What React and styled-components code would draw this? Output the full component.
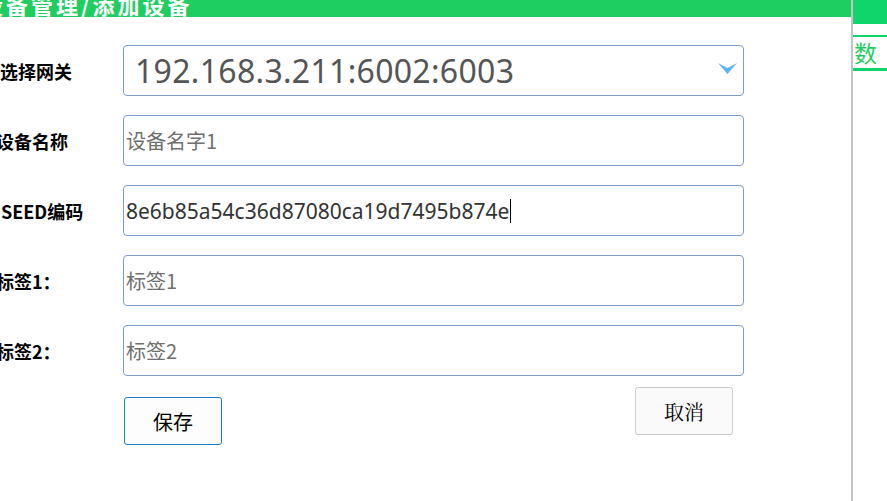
import React from "react";
import styled, { createGlobalStyle } from "styled-components";

const GlobalStyle = createGlobalStyle`
  html, body {
    margin: 0;
    padding: 0;
    background: #ffffff;
    overflow: hidden;
  }
  body {
    font-family: "Noto Sans CJK SC", "Noto Sans", sans-serif;
  }
`;

const fields = [
  { label: "设备名称", placeholder: "设备名字1", value: "" },
  { label: "SEED编码", placeholder: "", value: "8e6b85a54c36d87080ca19d7495b874e", caret: true },
  { label: "标签1：", placeholder: "标签1", value: "" },
  { label: "标签2：", placeholder: "标签2", value: "" },
];

const App = () => {
  return (
    <>
      <GlobalStyle />
      <Page>
        <Dialog>
          <Header>
            <Title>设备管理/添加设备</Title>
          </Header>
          <Body>
            <Row>
              <Label>选择网关</Label>
              <SelectBox>
                <SelectValue>192.168.3.211:6002:6003</SelectValue>
                <svg width="19" height="11" viewBox="0 0 19 11">
                  <polygon points="0,0 9.5,5 19,0 9.5,11" fill="#5ab4f4" />
                </svg>
              </SelectBox>
            </Row>
            {fields.map((f) => (
              <Row key={f.label}>
                <Label $shift={f.label.startsWith("SEED") ? 1 : -4}>
                  {f.label}
                </Label>
                <InputBox>
                  {f.value ? (
                    <InputText>
                      {f.value}
                      {f.caret && <Caret />}
                    </InputText>
                  ) : (
                    <Placeholder>{f.placeholder}</Placeholder>
                  )}
                </InputBox>
              </Row>
            ))}
            <Actions>
              <SaveButton>保存</SaveButton>
              <CancelButton>取消</CancelButton>
            </Actions>
          </Body>
        </Dialog>
        <Divider />
        <SidePanel>
          <SideTopBar />
          <SideTab>数</SideTab>
        </SidePanel>
      </Page>
    </>
  );
};

const Page = styled.div`
  display: flex;
  width: 887px;
  height: 501px;
  overflow: hidden;
`;

const Dialog = styled.div`
  width: 851px;
  flex-shrink: 0;
  display: flex;
  flex-direction: column;
`;

const Header = styled.div`
  height: 17px;
  background-color: #1fce60;
  overflow: hidden;
  display: flex;
  align-items: flex-end;
`;

const Title = styled.div`
  color: #ffffff;
  font-weight: bold;
  font-size: 22px;
  letter-spacing: 3px;
  line-height: 22px;
  white-space: nowrap;
  margin-left: -19px;
  margin-bottom: 2px;
`;

const Body = styled.div`
  display: flex;
  flex-direction: column;
  gap: 19px;
  padding-top: 28px;
`;

const Row = styled.div`
  display: flex;
  align-items: center;
`;

const Label = styled.div`
  width: 123px;
  flex-shrink: 0;
  font-size: 18px;
  font-weight: bold;
  color: #000000;
  margin-left: ${(p) => (p.$shift !== undefined ? p.$shift : 0)}px;
  margin-right: ${(p) => (p.$shift !== undefined ? -p.$shift : 0)}px;
  white-space: nowrap;
`;

const Box = styled.div`
  width: 621px;
  height: 51px;
  box-sizing: border-box;
  border: 1px solid #7f9dc9;
  border-radius: 4px;
  display: flex;
  align-items: center;
  background: #ffffff;
`;

const SelectBox = styled(Box)`
  padding: 0 6px 0 11px;
  justify-content: space-between;
  & > svg {
    margin-top: -4px;
  }
`;

const SelectValue = styled.span`
  font-family: "Noto Sans", "Noto Sans CJK SC", sans-serif;
  font-size: 32px;
  color: #555555;
  letter-spacing: 0.3px;
`;

const InputBox = styled(Box)`
  padding-left: 2px;
`;

const InputText = styled.span`
  font-family: "Noto Sans", "Noto Sans CJK SC", sans-serif;
  font-size: 21px;
  color: #333333;
  display: flex;
  align-items: center;
`;

const Caret = styled.span`
  display: inline-block;
  width: 1px;
  height: 24px;
  background: #000000;
  margin-left: 1px;
`;

const Placeholder = styled.span`
  font-size: 20px;
  color: #6f6f6f;
`;

const Actions = styled.div`
  display: flex;
  align-items: flex-start;
  width: 733px;
  padding-left: 124px;
  box-sizing: border-box;
  justify-content: space-between;
  margin-top: -8px;
`;

const ButtonBase = styled.button`
  width: 98px;
  height: 48px;
  font-size: 20px;
  border-radius: 3px;
  color: #000000;
  cursor: pointer;
  padding: 0;
`;

const SaveButton = styled(ButtonBase)`
  margin-top: 10px;
  border: 1px solid #1a7fd0;
  background: #fdfdfd;
  font-family: "Noto Sans CJK SC", sans-serif;
`;

const CancelButton = styled(ButtonBase)`
  border: 1px solid #cccccc;
  background: #fafafa;
  font-family: "Noto Serif CJK SC", "AR PL UMing CN", "Noto Sans CJK SC", serif;
`;

const Divider = styled.div`
  width: 2px;
  flex-shrink: 0;
  background: #c4c4c4;
`;

const SidePanel = styled.div`
  flex: 1;
  display: flex;
  flex-direction: column;
`;

const SideTopBar = styled.div`
  height: 24px;
  background: #10d56a;
  margin-bottom: 11px;
`;

const SideTab = styled.div`
  border-top: 2px solid #10d56a;
  border-bottom: 3px solid #10d56a;
  height: 31px;
  font-size: 23px;
  line-height: 31px;
  color: #1fce60;
  padding-left: 1px;
`;

export default App;
